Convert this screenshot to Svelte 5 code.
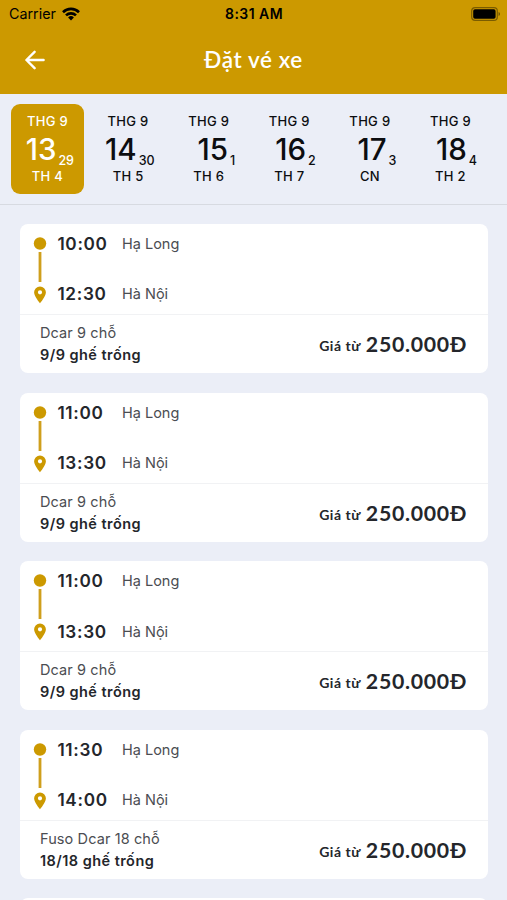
<script>
  const days = [
    { month: "THG 9", date: 13, lunar: 29, weekday: "TH 4" },
    { month: "THG 9", date: 14, lunar: 30, weekday: "TH 5" },
    { month: "THG 9", date: 15, lunar: 1, weekday: "TH 6" },
    { month: "THG 9", date: 16, lunar: 2, weekday: "TH 7" },
    { month: "THG 9", date: 17, lunar: 3, weekday: "CN" },
    { month: "THG 9", date: 18, lunar: 4, weekday: "TH 2" }
  ];

  const trips = [
    { start: "10:00", end: "12:30", bus: "Dcar 9 chỗ", seats: "9/9" },
    { start: "11:00", end: "13:30", bus: "Dcar 9 chỗ", seats: "9/9" },
    { start: "11:00", end: "13:30", bus: "Dcar 9 chỗ", seats: "9/9" },
    { start: "11:30", end: "14:00", bus: "Fuso Dcar 18 chỗ", seats: "18/18" }
  ];

  let selected = 13;
</script>

<div class="screen">
  <header class="header">
    <div class="status">
      <div class="status__carrier">
        <span>Carrier</span>
        <svg width="18" height="14" viewBox="0 0 18 14" fill="none" stroke="#000" stroke-width="2.6">
          <path d="M1 5.2a11.4 11.4 0 0 1 16 0" />
          <path d="M4 8.4a7.1 7.1 0 0 1 10 0" />
          <path d="M9 13.4L6.1 10.5a4.1 4.1 0 0 1 5.8 0z" fill="#000" stroke="none" />
        </svg>
      </div>
      <div class="status__time">8:31 AM</div>
      <div class="status__battery">
        <svg width="30" height="14" viewBox="0 0 30 14">
          <rect x="0.7" y="0.7" width="25.6" height="12.6" rx="3.4" fill="none" stroke="#000" stroke-opacity="0.4" stroke-width="1.2" />
          <rect x="2.2" y="2.2" width="22.4" height="9.6" rx="1.8" fill="#000" />
          <path d="M27.6 4.9v4.2a2.3 2.3 0 0 0 0-4.2z" fill="#000" fill-opacity="0.5" />
        </svg>
      </div>
    </div>
    <div class="nav">
      <button class="nav__back" aria-label="Quay lại">
        <svg width="20" height="20" viewBox="0 0 20 20" fill="none" stroke="#fff" stroke-width="2.4" stroke-linecap="round" stroke-linejoin="round">
          <path d="M18.6 10H1.6M9.6 1.8L1.4 10l8.2 8.2" />
        </svg>
      </button>
      <h1 class="nav__title">Đặt vé xe</h1>
    </div>
  </header>

  <div class="days">
    {#each days as day}
      <button class="day" class:day--active={day.date === selected} on:click={() => (selected = day.date)}>
        <span class="day__label">{day.month}</span>
        <span class="day__number">{day.date}<span class="day__lunar">{day.lunar}</span></span>
        <span class="day__label">{day.weekday}</span>
      </button>
    {/each}
  </div>

  <div class="trips">
    {#each trips as trip}
      <div class="trip">
        <div class="trip__route">
          <svg class="trip__line" width="14" height="67" viewBox="0 0 14 67">
            <circle cx="7" cy="6.5" r="6.2" fill="#cc9900" />
            <path d="M7 15v30" stroke="#cf9f1c" stroke-width="2.8" />
            <path fill="#cc9900" fill-rule="evenodd" d="M7 49.4a5.9 5.9 0 0 0-5.9 5.9c0 4.2 5.9 11 5.9 11s5.9-6.8 5.9-11A5.9 5.9 0 0 0 7 49.4zm0 3.8a2.1 2.1 0 1 1 0 4.2 2.1 2.1 0 0 1 0-4.2z" />
          </svg>
          <div class="trip__stops">
            <div class="stop"><span class="stop__time">{trip.start}</span><span class="stop__place">Hạ Long</span></div>
            <div class="stop"><span class="stop__time">{trip.end}</span><span class="stop__place">Hà Nội</span></div>
          </div>
        </div>
        <div class="trip__info">
          <div>
            <div class="trip__bus">{trip.bus}</div>
            <div class="trip__seats">{trip.seats} ghế trống</div>
          </div>
          <div class="trip__price"><span class="trip__from">Giá từ</span><span class="trip__amount">250.000Đ</span></div>
        </div>
      </div>
    {/each}
    <div class="trip"></div>
  </div>
</div>

<style>
  :global(body) {
    background: #ebeef7;
    overflow: hidden;
  }

  .screen {
    height: 900px;
    overflow: hidden;
    background: #ebeef7;
    font-family: Inter, "Noto Sans", sans-serif;
    color: #24262b;
  }

  button {
    border: 0;
    padding: 0;
    background: none;
    font: inherit;
    color: inherit;
  }

  svg {
    display: block;
  }

  .header {
    height: 94px;
    background: #cc9900;
  }

  .status {
    display: grid;
    grid-template-columns: 1fr auto 1fr;
    align-items: center;
    height: 27px;
    padding: 0 6px 0 9px;
    color: #000;
    font-size: 14.3px;
  }

  .status__carrier {
    display: flex;
    align-items: center;
    gap: 6px;
  }

  .status__time {
    margin-right: 2px;
    font-weight: 600;
    font-size: 14px;
    letter-spacing: 0.45px;
  }

  .status__battery {
    justify-self: end;
  }

  .nav {
    display: grid;
    grid-template-columns: 60px 1fr 60px;
    align-items: center;
    height: 66px;
  }

  .nav__back {
    justify-self: end;
    margin-right: 15px;
  }

  .nav__title {
    margin: 0;
    text-align: center;
    font-family: Lato, sans-serif;
    font-size: 22.5px;
    font-weight: 600;
    line-height: 28px;
    letter-spacing: 0.6px;
    color: #fff;
  }

  .days {
    display: flex;
    gap: 7.6px;
    height: 111px;
    box-sizing: border-box;
    padding: 10px 0 0 11px;
    border-bottom: 1px solid #d7dae1;
  }

  .day {
    display: flex;
    flex-direction: column;
    flex: 0 0 73px;
    height: 90px;
    padding-top: 9px;
    border-radius: 9px;
    color: #0c0d10;
  }

  .day--active {
    background: #cc9900;
    color: #fff;
  }

  .day__label {
    font-size: 13px;
    font-weight: 500;
    line-height: 16px;
    letter-spacing: 0.3px;
    text-align: center;
  }

  .day__number {
    padding-right: 10px;
    height: 39px;
    font-size: 29.5px;
    font-weight: 500;
    line-height: 41px;
    text-align: right;
    white-space: nowrap;
  }

  .day__lunar {
    position: relative;
    top: 5px;
    margin-left: 2px;
    font-size: 12.5px;
  }

  .trips {
    padding: 19px 19.5px 0 20px;
  }

  .trip {
    height: 149px;
    margin-bottom: 19.6px;
    border-radius: 8px;
    background: #fff;
  }

  .trip__route {
    display: flex;
    height: 91px;
    box-sizing: border-box;
    padding: 10px 13px 0;
    border-bottom: 1px solid #f1f2f4;
  }

  .trip__line {
    margin-top: 3px;
  }

  .trip__stops {
    margin-left: 10.4px;
  }

  .stop {
    display: flex;
    height: 50.4px;
    line-height: 20.6px;
  }

  .stop__time {
    width: 64.6px;
    font-size: 17.2px;
    font-weight: 600;
    letter-spacing: 0.7px;
  }

  .stop__place {
    font-size: 14.5px;
    color: #4b4d52;
  }

  .trip__info {
    display: flex;
    justify-content: space-between;
    padding: 7px 20.5px 0 20px;
    line-height: 22px;
  }

  .trip__bus {
    font-size: 14.5px;
    letter-spacing: 0.1px;
    color: #4b4d52;
  }

  .trip__seats {
    font-size: 14.5px;
    font-weight: 600;
    letter-spacing: 0.45px;
  }

  .trip__price {
    display: flex;
    align-items: baseline;
    gap: 5px;
    padding-top: 11px;
    font-family: Lato, sans-serif;
    font-weight: 700;
  }

  .trip__from {
    position: relative;
    top: -1px;
    font-size: 14px;
    letter-spacing: 0.5px;
  }

  .trip__amount {
    font-size: 21.3px;
    letter-spacing: 0.7px;
  }
</style>
